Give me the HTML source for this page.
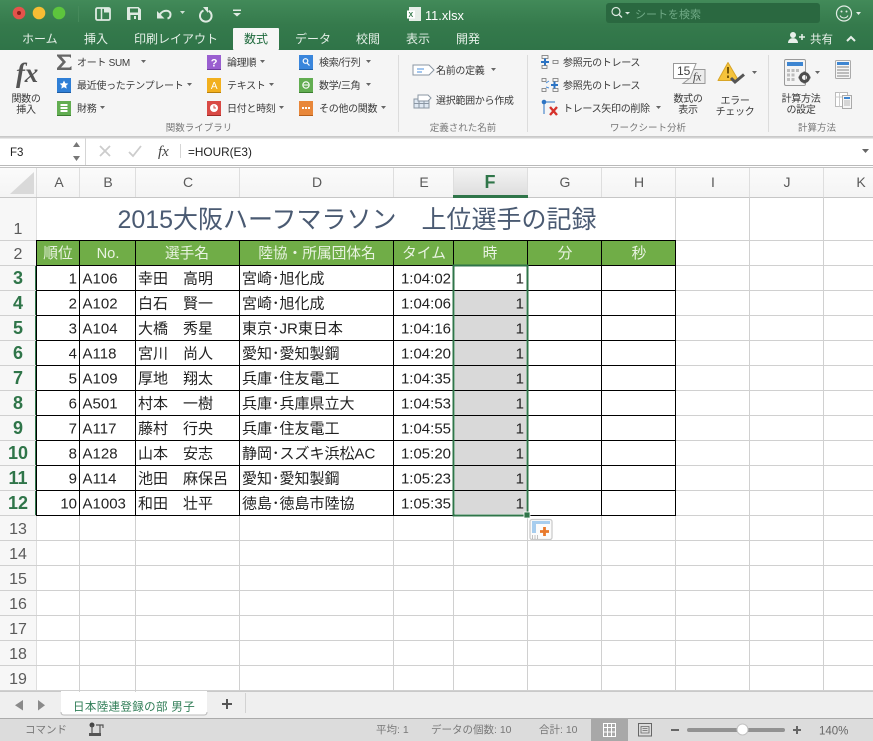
<!DOCTYPE html>
<html lang="ja"><head><meta charset="utf-8"><title>11.xlsx</title>
<style>
html,body{margin:0;padding:0;background:#fff;width:873px;height:741px;overflow:hidden}
svg{display:block}
text{font-family:"Liberation Sans","Noto Sans CJK JP",sans-serif}
.r text{font-size:10px;fill:#3a3a3a;letter-spacing:-.3px}
.tab{font-size:12px;fill:#e4efe7}
.g{font-size:9.5px;fill:#777;text-anchor:middle}
.ch{font-size:14px;fill:#5a5a5a;text-anchor:middle}
.rh{font-size:16px;fill:#5a5a5a;text-anchor:middle}
.rb{font-size:18px;fill:#2f7549;font-weight:bold;text-anchor:middle}
.th{font-size:14.7px;fill:#e9f3e2;text-anchor:middle}
.c{font-size:15px;fill:#222}
.e{text-anchor:end}
.tri{fill:#666}
</style></head><body>
<svg width="873" height="741" viewBox="0 0 873 741" xmlns="http://www.w3.org/2000/svg">
<defs>
<linearGradient id="tb" x1="0" y1="0" x2="0" y2="1"><stop offset="0" stop-color="#428a59"/><stop offset=".5" stop-color="#357a4c"/><stop offset="1" stop-color="#2f7448"/></linearGradient>
<linearGradient id="hd" x1="0" y1="0" x2="0" y2="1"><stop offset="0" stop-color="#fbfbfb"/><stop offset="1" stop-color="#f4f4f4"/></linearGradient>
<linearGradient id="fh" x1="0" y1="0" x2="0" y2="1"><stop offset="0" stop-color="#f4f4f4"/><stop offset="1" stop-color="#dedede"/></linearGradient>
</defs>

<!-- title bar -->
<rect width="873" height="50" fill="url(#tb)"/>
<circle cx="19" cy="13" r="6.300" fill="#e5534b"/><circle cx="19" cy="13" r="2" fill="#8a1f1a"/>
<circle cx="39" cy="13" r="6.300" fill="#f7bd34"/>
<circle cx="59" cy="13" r="6.300" fill="#5dc53d"/>
<path d="M78.500 6V22" stroke="#468a5b"/>
<!-- qat -->
<rect x="96" y="8" width="14" height="12" rx="1.500" fill="none" stroke="#dfeae2" stroke-width="1.800"/>
<path d="M101.500 8v12" stroke="#dfeae2" stroke-width="1.500"/>
<path d="M104 8h4l2.500 3v1.500H104z" fill="#dfeae2"/>
<path d="M128 7h10.500l2.500 2.500V20h-13.500q-.5 0-.5-.5V8q0-1 1-1z" fill="#dfeae2"/>
<rect x="130" y="8.500" width="8" height="4" fill="#3a7f50"/>
<rect x="130.500" y="15" width="7.500" height="5" fill="#3a7f50"/><rect x="134" y="16" width="2" height="3" fill="#dfeae2"/>
<path d="M157 11l7.500 7.500H157z" fill="#dfeae2"/>
<path d="M160 14.500c2.500-5 10.500-5 10.500 0 0 2-1 3.500-3 4" fill="none" stroke="#dfeae2" stroke-width="2"/>
<path d="M180 11h5l-2.500 3z" fill="#cfe0d4"/>
<path d="M203.500 10.500a5.800 5.800 0 1 0 5 .2" fill="none" stroke="#dfeae2" stroke-width="2"/>
<path d="M203 7l5 0 0 6z" fill="#dfeae2"/>
<path d="M233 9.500h8v1.500h-8zM233 13h8l-4 3.500z" fill="#dfeae2"/>
<!-- filename -->
<rect x="409" y="7" width="12" height="14" fill="#e6eee8"/><rect x="407" y="10.500" width="8" height="8" fill="#fff"/>
<text x="408.500" y="17" font-size="7" fill="#357a4c" font-weight="bold">X</text>
<text x="425" y="20" font-size="12.800" fill="#fff">11.xlsx</text>
<!-- search -->
<rect x="606" y="3" width="214" height="20" rx="3" fill="#2a6840"/>
<circle cx="616" cy="11.500" r="4" fill="none" stroke="#dbe8df" stroke-width="1.200"/><path d="M619 14.500l3 3" stroke="#dbe8df" stroke-width="1.300"/>
<path d="M625 12h5l-2.500 2.500z" fill="#dbe8df"/>
<text x="635" y="18" font-size="11" fill="#6fa985">シートを検索</text>
<circle cx="844" cy="13.500" r="7.500" fill="none" stroke="#e3ede6" stroke-width="1.200"/>
<circle cx="841.500" cy="11.500" r="1" fill="#e3ede6"/><circle cx="846.500" cy="11.500" r="1" fill="#e3ede6"/>
<path d="M840 15.500a4.500 4.500 0 0 0 8 0" fill="none" stroke="#e3ede6"/>
<path d="M856 12h5l-2.500 3z" fill="#e3ede6"/>

<!-- tabs -->
<rect x="233" y="28" width="46" height="22" rx="1" fill="#f6f6f6"/>
<text class="tab" x="22" y="43">ホーム</text>
<text class="tab" x="84" y="43">挿入</text>
<text class="tab" x="134" y="43">印刷レイアウト</text>
<text class="tab" x="244" y="43" style="fill:#1f6a3d">数式</text>
<text class="tab" x="295" y="43">データ</text>
<text class="tab" x="356" y="43">校閲</text>
<text class="tab" x="406" y="43">表示</text>
<text class="tab" x="456" y="43">開発</text>
<circle cx="793" cy="35" r="3" fill="#e8f0ea"/><path d="M788 43c0-6.500 10-6.500 10 0z" fill="#e8f0ea"/><path d="M799 37h6M802 34v6" stroke="#e8f0ea" stroke-width="1.500"/>
<text class="tab" x="810" y="43" style="fill:#e8f0ea;font-size:11.500px">共有</text>
<path d="M847 41l4-4 4 4" fill="none" stroke="#e8f0ea" stroke-width="2"/>

<!-- ribbon -->
<rect y="50" width="873" height="86" fill="#f5f5f5"/>
<path d="M0 136.500H873" stroke="#c9c9c9"/>
<path d="M398.500 55V132M527.500 55V132M768.500 55V132" stroke="#dcdcdc"/>

<g class="r">
<text x="27" y="82" text-anchor="middle" style="font-family:'Liberation Serif',serif;font-style:italic;font-size:27px;font-weight:bold;fill:#555">fx</text>
<text x="26" y="102" text-anchor="middle">関数の</text>
<text x="26" y="113" text-anchor="middle">挿入</text>

<path d="M57 54.500H71V58L69.500 56.800H61.500L66 62 61 67.500H69.500L71.500 66V70H57V68L62.500 62 57 56z" fill="#666"/>
<text x="77" y="66">オート SUM</text>
<path d="M141 60h5l-2.500 3z" class="tri"/>
<rect x="57" y="78" width="14" height="14" fill="#2f7fd6"/><path d="M57 92.500h14" stroke="#1d5aa0"/>
<path d="M64 80.500l1.300 2.800 3 .3-2.200 2 .6 3-2.700-1.500-2.700 1.500.6-3-2.200-2 3-.3z" fill="#fff"/>
<text x="77" y="89">最近使ったテンプレート</text>
<path d="M187 83h5l-2.500 3z" class="tri"/>
<rect x="57" y="101" width="14" height="14" fill="#62ad51"/><path d="M57 115.500h14" stroke="#3b7d2f"/>
<rect x="60.500" y="104" width="7" height="2" fill="#fff"/><rect x="60.500" y="107" width="7" height="2" fill="#fff"/><rect x="60.500" y="110" width="7" height="2" fill="#fff"/>
<text x="77" y="112">財務</text>
<path d="M100 106h5l-2.500 3z" class="tri"/>

<rect x="207" y="55" width="14" height="14" fill="#9a5fd0"/><path d="M207 69.500h14" stroke="#6c3a9c"/>
<text x="214" y="66.500" text-anchor="middle" style="font-size:11px;font-weight:bold;fill:#fff">?</text>
<text x="227" y="66">論理順</text>
<path d="M260 60h5l-2.500 3z" class="tri"/>
<rect x="207" y="78" width="14" height="14" fill="#f2b01e"/><path d="M207 92.500h14" stroke="#b77f0c"/>
<text x="214" y="89" text-anchor="middle" style="font-size:10px;fill:#fff">A</text>
<text x="227" y="89">テキスト</text>
<path d="M269 83h5l-2.500 3z" class="tri"/>
<rect x="207" y="101" width="14" height="14" fill="#d94a45"/><path d="M207 115.500h14" stroke="#a02a26"/>
<circle cx="214" cy="108" r="4" fill="#fff"/><path d="M214 105.500V108h2" fill="none" stroke="#d94a45"/>
<text x="227" y="112">日付と時刻</text>
<path d="M279 106h5l-2.500 3z" class="tri"/>

<rect x="299" y="55" width="14" height="14" fill="#3a86dc"/><path d="M299 69.500h14" stroke="#2260a8"/>
<circle cx="305.500" cy="61" r="2.300" fill="none" stroke="#fff" stroke-width="1.200"/><path d="M307 63l2.500 2.500" stroke="#fff" stroke-width="1.200"/>
<text x="319" y="66">検索/行列</text>
<path d="M366 60h5l-2.500 3z" class="tri"/>
<rect x="299" y="78" width="14" height="14" fill="#62ad51"/><path d="M299 92.500h14" stroke="#3b7d2f"/>
<circle cx="306" cy="85" r="3.200" fill="none" stroke="#fff" stroke-width="1.100"/><path d="M303 85h6" stroke="#fff"/>
<text x="319" y="89">数学/三角</text>
<path d="M366 83h5l-2.500 3z" class="tri"/>
<rect x="299" y="101" width="14" height="14" fill="#e8873a"/><path d="M299 115.500h14" stroke="#b55f1c"/>
<path d="M302 108h2M305 108h2M308 108h2" stroke="#fff" stroke-width="2"/>
<text x="319" y="112">その他の関数</text>
<path d="M381 106h5l-2.500 3z" class="tri"/>

<path d="M413 65h16l5 5-5 5h-16z" fill="#fff" stroke="#8a96a3"/><path d="M417 69h7M417 72h5" stroke="#4a8fdc"/>
<text x="436" y="74">名前の定義</text>
<path d="M491 68h5l-2.500 3z" class="tri"/>
<rect x="414" y="99" width="15" height="9" fill="#dfe8f2" stroke="#8a96a3"/><path d="M419 99v9M424 99v9M414 103.500h15" stroke="#8a96a3"/>
<path d="M418 95h10l3 3-3 3h-10z" fill="#fff" stroke="#8a96a3"/>
<text x="436" y="104">選択範囲から作成</text>

<g fill="none" stroke="#777" stroke-width=".8">
<rect x="542" y="55.500" width="6" height="3"/><rect x="542" y="65.500" width="5" height="3"/><rect x="553" y="60.500" width="5" height="3"/>
<rect x="542" y="78.500" width="4" height="3"/><rect x="553" y="78.500" width="5" height="3"/><rect x="542" y="88.500" width="4" height="3"/><rect x="553" y="88.500" width="5" height="3"/>
</g>
<path d="M541 62h8M545 58.500v7" stroke="#2c74c4" stroke-width="2"/>
<path d="M551 85h7M554.500 81.500v7" stroke="#2c74c4" stroke-width="2"/>
<path d="M546 83l3 -2M546 87l3 1" stroke="#4a8fdc"/>
<text x="563" y="66">参照元のトレース</text>
<text x="563" y="89">参照先のトレース</text>
<circle cx="544" cy="102" r="2.300" fill="#2c74c4"/><path d="M545 102h10M544 103v11" stroke="#2c74c4"/>
<path d="M550 107l7 8M557 107l-7 8" stroke="#d6322c" stroke-width="2.400"/>
<text x="563" y="112">トレース矢印の削除</text>
<path d="M656 106h5l-2.500 3z" class="tri"/>

<path d="M692 69.500H705V83.500H683L690 78Z" fill="#ececec" stroke="#999"/>
<path d="M673.500 63.500H696L690 78.500H673.500Z" fill="#fff" stroke="#999"/>
<text x="677" y="75" style="font-size:12px;fill:#444;letter-spacing:0">15</text>
<text x="693" y="80.500" style="font-family:'Liberation Serif',serif;font-style:italic;font-size:11.500px;fill:#444;letter-spacing:0">fx</text>
<text x="688" y="102" text-anchor="middle">数式の</text>
<text x="688" y="113" text-anchor="middle">表示</text>

<path d="M728 62.500L718 80.500H738.500Z" fill="#f5c33c" stroke="#d8a526" stroke-linejoin="round"/>
<path d="M728 67v6.500M728 75.500v2.500" stroke="#6b4a00" stroke-width="1.800"/>
<path d="M731 78l4 4 9-7.500" fill="none" stroke="#555" stroke-width="3"/>
<path d="M752 71h5l-2.500 3z" class="tri"/>
<text x="735" y="104" text-anchor="middle">エラー</text>
<text x="735" y="115" text-anchor="middle">チェック</text>

<rect x="784.500" y="59.500" width="21" height="26" rx="1.500" fill="#f4f4f4" stroke="#9a9a9a"/>
<rect x="787" y="62" width="16" height="4" fill="#3d85d1"/>
<path d="M787 69h3v3h-3zM791.500 69h3v3h-3zM796 69h3v3h-3zM787 73.500h3v3h-3zM791.500 73.500h3v3h-3zM787 78h3v3h-3zM791.500 78h3v3h-3z" fill="#bdbdbd"/>
<circle cx="804.500" cy="77.500" r="4" fill="none" stroke="#4d4d4d" stroke-width="3"/>
<path d="M804.500 71.500v2.500M804.500 81v2.500M798.500 77.500h2.500M808 77.500h2.500" stroke="#4d4d4d" stroke-width="2"/>
<path d="M815 71h5l-2.500 3z" class="tri"/>
<text x="801" y="102" text-anchor="middle">計算方法</text>
<text x="801" y="113" text-anchor="middle">の設定</text>
<rect x="835.500" y="60.500" width="15" height="18" rx="1" fill="#f6f6f6" stroke="#aaa"/>
<rect x="837" y="62" width="12" height="3" fill="#3d85d1"/>
<path d="M837 67h12M837 70h12M837 73h12M837 76h12" stroke="#b5b5b5" stroke-width="1.800"/>
<rect x="835.500" y="92.500" width="12" height="14" fill="#fff" stroke="#bbb"/><path d="M839.500 92.500v14M835.500 97h8" stroke="#ccc"/>
<rect x="842.500" y="95.500" width="9" height="13" fill="#f6f6f6" stroke="#aaa"/><rect x="844" y="97" width="6" height="2" fill="#3d85d1"/><path d="M844 101h6M844 103h6M844 105h6" stroke="#b5b5b5"/>
</g>
<text class="g" x="199" y="131">関数ライブラリ</text>
<text class="g" x="463" y="131">定義された名前</text>
<text class="g" x="648" y="131">ワークシート分析</text>
<text class="g" x="817" y="131">計算方法</text>

<!-- formula bar -->
<rect y="138" width="873" height="27" fill="#fff"/>
<rect y="137" width="873" height="1.500" fill="#d2d2d2"/>
<path d="M85.500 138V165" stroke="#d5d5d5"/>
<text x="10" y="156" font-size="11.500" fill="#222">F3</text>
<path d="M73 147l3.500-5 3.500 5zM73 156l3.500 5 3.500-5z" fill="#777"/>
<path d="M100 146l10 10M110 146l-10 10" stroke="#ccc" stroke-width="1.800"/>
<path d="M129 152l4 4 8-10" fill="none" stroke="#ccc" stroke-width="1.800"/>
<text x="158" y="156" style="font-family:'Liberation Serif',serif;font-style:italic;font-size:15px;fill:#444">fx</text>
<path d="M180.500 144V158" stroke="#d5d5d5"/>
<text x="188" y="156" font-size="11.800" fill="#222">=HOUR(E3)</text>
<path d="M862 149h7l-3.500 4z" fill="#666"/>
<rect y="165" width="873" height="1" fill="#b9b9b9"/><rect y="166" width="873" height="1" fill="#fff"/><rect y="167" width="873" height="1" fill="#c4c4c4"/>

<!-- headers -->
<rect y="168" width="873" height="29" fill="url(#hd)"/>
<rect y="197" width="36" height="495" fill="#f7f7f7"/>
<rect x="453" y="168" width="75" height="27" fill="url(#fh)"/>
<path d="M10 194L34 172V194Z" fill="#d9d9d9"/>
<path d="M36.500 168V692M79.500 168V197M135.500 168V197M239.500 168V197M393.500 168V197M453.500 168V197M527.500 168V197M601.500 168V197M675.500 168V197M749.500 168V197M823.500 168V197" stroke="#dedede"/>
<path d="M0 197.500H873" stroke="#c6c6c6"/>
<rect x="453" y="195" width="75" height="3" fill="#2f7549"/>
<g class="ch">
<text class="ch" x="59" y="187">A</text><text class="ch" x="108" y="187">B</text><text class="ch" x="188" y="187">C</text><text class="ch" x="317" y="187">D</text><text class="ch" x="424" y="187">E</text>
<text x="490" y="188" style="font-size:18px;font-weight:bold;fill:#2f7549;text-anchor:middle">F</text>
<text class="ch" x="565" y="187">G</text><text class="ch" x="639" y="187">H</text><text class="ch" x="713" y="187">I</text><text class="ch" x="787" y="187">J</text><text class="ch" x="861" y="187">K</text>
</g>
<text class="rh" x="18" y="234">1</text><text class="rh" x="18" y="259">2</text>
<text class="rb" x="18" y="284">3</text><text class="rb" x="18" y="309">4</text><text class="rb" x="18" y="334">5</text><text class="rb" x="18" y="359">6</text><text class="rb" x="18" y="384">7</text><text class="rb" x="18" y="409">8</text><text class="rb" x="18" y="434">9</text><text class="rb" x="18" y="459">10</text><text class="rb" x="18" y="484">11</text><text class="rb" x="18" y="509">12</text>
<text class="rh" x="18" y="534">13</text><text class="rh" x="18" y="559">14</text><text class="rh" x="18" y="584">15</text><text class="rh" x="18" y="609">16</text><text class="rh" x="18" y="634">17</text><text class="rh" x="18" y="659">18</text><text class="rh" x="18" y="684">19</text>
<rect x="35" y="265" width="2" height="251" fill="#2f7549"/>

<!-- grid -->
<g stroke="#d0d0d0">
<path d="M675.500 197V692M749.500 197V692M823.500 197V692"/>
<path d="M79.500 515V692M135.500 515V692M239.500 515V692M393.500 515V692M453.500 515V692M527.500 515V692M601.500 515V692"/>
<path d="M0 240.500H36M676 240.500H873M676 265.500H873M676 290.500H873M676 315.500H873M676 340.500H873M676 365.500H873M676 390.500H873M676 415.500H873M676 440.500H873M676 465.500H873M676 490.500H873M0 265.500H36M0 290.500H36M0 315.500H36M0 340.500H36M0 365.500H36M0 390.500H36M0 415.500H36M0 440.500H36M0 465.500H36M0 490.500H36"/>
<path d="M0 515.500H873M0 540.500H873M0 565.500H873M0 590.500H873M0 615.500H873M0 640.500H873M0 665.500H873M0 690.500H873"/>
</g>
<!-- title -->
<text x="357" y="228" font-size="25" fill="#4a5a72" text-anchor="middle">2015大阪ハーフマラソン　上位選手の記録</text>

<!-- table header -->
<rect x="37" y="240" width="639" height="25" fill="#70ad47"/>
<!-- selection fill -->
<rect x="455" y="291" width="71" height="223" fill="#d9d9d9"/>
<!-- table lines -->
<g stroke="#000">
<path d="M36.500 240V516M79.500 240V516M135.500 240V516M239.500 240V516M393.500 240V516M453.500 240V516M527.500 240V516M601.500 240V516M675.500 240V516"/>
<path d="M36 240.500H676M36 265.500H676M36 290.500H676M36 315.500H676M36 340.500H676M36 365.500H676M36 390.500H676M36 415.500H676M36 440.500H676M36 465.500H676M36 490.500H676M36 515.500H676"/>
</g>
<text class="th" x="58" y="258">順位</text><text class="th" x="108" y="258">No.</text><text class="th" x="187" y="258">選手名</text><text class="th" x="317" y="258">陸協・所属団体名</text><text class="th" x="424" y="258">タイム</text><text class="th" x="490" y="258">時</text><text class="th" x="565" y="258">分</text><text class="th" x="639" y="258">秒</text>

<g class="c" transform="translate(0,.5)">
<text class="c e" x="77" y="283">1</text><text class="c" x="82.500" y="283">A106</text><text class="c" x="138" y="283">幸田　高明</text><text class="c" x="242" y="283">宮崎･旭化成</text><text class="c e" x="451" y="283">1:04:02</text><text class="c e" x="524" y="283">1</text>
<text class="c e" x="77" y="308">2</text><text class="c" x="82.500" y="308">A102</text><text class="c" x="138" y="308">白石　賢一</text><text class="c" x="242" y="308">宮崎･旭化成</text><text class="c e" x="451" y="308">1:04:06</text><text class="c e" x="524" y="308">1</text>
<text class="c e" x="77" y="333">3</text><text class="c" x="82.500" y="333">A104</text><text class="c" x="138" y="333">大橋　秀星</text><text class="c" x="242" y="333">東京･JR東日本</text><text class="c e" x="451" y="333">1:04:16</text><text class="c e" x="524" y="333">1</text>
<text class="c e" x="77" y="358">4</text><text class="c" x="82.500" y="358">A118</text><text class="c" x="138" y="358">宮川　尚人</text><text class="c" x="242" y="358">愛知･愛知製鋼</text><text class="c e" x="451" y="358">1:04:20</text><text class="c e" x="524" y="358">1</text>
<text class="c e" x="77" y="383">5</text><text class="c" x="82.500" y="383">A109</text><text class="c" x="138" y="383">厚地　翔太</text><text class="c" x="242" y="383">兵庫･住友電工</text><text class="c e" x="451" y="383">1:04:35</text><text class="c e" x="524" y="383">1</text>
<text class="c e" x="77" y="408">6</text><text class="c" x="82.500" y="408">A501</text><text class="c" x="138" y="408">村本　一樹</text><text class="c" x="242" y="408">兵庫･兵庫県立大</text><text class="c e" x="451" y="408">1:04:53</text><text class="c e" x="524" y="408">1</text>
<text class="c e" x="77" y="433">7</text><text class="c" x="82.500" y="433">A117</text><text class="c" x="138" y="433">藤村　行央</text><text class="c" x="242" y="433">兵庫･住友電工</text><text class="c e" x="451" y="433">1:04:55</text><text class="c e" x="524" y="433">1</text>
<text class="c e" x="77" y="458">8</text><text class="c" x="82.500" y="458">A128</text><text class="c" x="138" y="458">山本　安志</text><text class="c" x="242" y="458">静岡･スズキ浜松AC</text><text class="c e" x="451" y="458">1:05:20</text><text class="c e" x="524" y="458">1</text>
<text class="c e" x="77" y="483">9</text><text class="c" x="82.500" y="483">A114</text><text class="c" x="138" y="483">池田　麻保呂</text><text class="c" x="242" y="483">愛知･愛知製鋼</text><text class="c e" x="451" y="483">1:05:23</text><text class="c e" x="524" y="483">1</text>
<text class="c e" x="77" y="508">10</text><text class="c" x="82.500" y="508">A1003</text><text class="c" x="138" y="508">和田　壮平</text><text class="c" x="242" y="508">徳島･徳島市陸協</text><text class="c e" x="451" y="508">1:05:35</text><text class="c e" x="524" y="508">1</text>
</g>

<!-- selection border -->
<rect x="453.500" y="265.500" width="74" height="250" fill="none" stroke="#2f7549" stroke-width="2"/>
<rect x="524" y="512" width="6" height="6" fill="#2f7549" stroke="#fff" stroke-width=".8"/>
<!-- autofill button -->
<rect x="530" y="519.500" width="22" height="20" rx="2" fill="#fbfbfb" stroke="#c9c9c9" stroke-width="1.200"/>
<path d="M532 521h18v3h-14v9h-4z" fill="#a7cdee"/>
<path d="M544.500 527v9M540 531.500h9" stroke="#e8792b" stroke-width="2.800"/>
<path d="M532 536h1M534.500 536h1M537 536h1M532 538h1M534.500 538h1M537 538h1" stroke="#888"/>

<!-- sheet tabs -->
<rect y="692" width="873" height="26" fill="#efefef"/>
<path d="M0 691.500H61M207 691.500H873" stroke="#c9c9c9"/>
<path d="M23 700v10.500l-8-5.250zM38 700v10.500l7-5.250z" fill="#8a8a8a"/>
<path d="M61 692v20q0 3 3 3h140q3 0 3-3v-20z" fill="#fff"/>
<path d="M61 712q0 3 3 3h140q3 0 3-3" fill="none" stroke="#bbb"/>
<text x="73" y="710.500" font-size="11.500" fill="#2f7d56" letter-spacing=".35">日本陸連登録の部 男子</text>
<path d="M222 704h10M227 699v10" stroke="#555" stroke-width="2"/>
<path d="M245.500 693V713" stroke="#d2d2d2"/>

<!-- status bar -->
<rect y="718" width="873" height="23" fill="#dcdcdc"/>
<rect y="718" width="873" height="1" fill="#ababab"/>
<g font-size="10.500" fill="#777">
<text x="25" y="733">コマンド</text>
<text x="376" y="733">平均: 1</text>
<text x="431" y="733">データの個数: 10</text>
<text x="539" y="733">合計: 10</text>
</g>
<circle cx="92" cy="725" r="2.500" fill="#444"/>
<path d="M92 725v9M96 725h7v3M100 725v9" fill="none" stroke="#555" stroke-width="1.200"/>
<rect x="89" y="733" width="12" height="3" fill="#555"/>
<rect x="591" y="719" width="37" height="22" fill="#a8a8a8"/>
<path d="M603.500 723.500h12v13h-12zM603.500 727.500h12M603.500 732h12M607.500 723.500v13M611.500 723.500v13" fill="none" stroke="#fff"/>
<path d="M638.500 723.500h13v12.500h-13z" fill="none" stroke="#666"/>
<path d="M641 726.500h8v6.500h-8zM642.500 728.500h5M642.500 730.500h5" fill="none" stroke="#666" stroke-width=".8"/>
<path d="M671 730h8" stroke="#666" stroke-width="2"/>
<rect x="687" y="728" width="98" height="4" rx="2" fill="#929292"/>
<circle cx="742.500" cy="729.500" r="5.500" fill="#fff" stroke="#c2c2c2"/>
<path d="M793 730h8M797 726v8" stroke="#666" stroke-width="2"/>
<text x="819" y="734.500" font-size="11.500" fill="#666">140%</text>
</svg>
</body></html>
